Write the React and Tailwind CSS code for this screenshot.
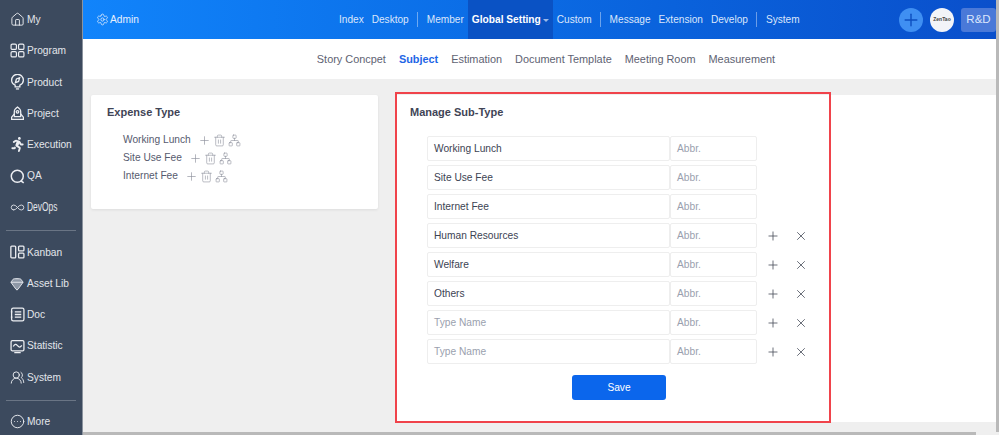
import React from "react";
import { Home, Infinity as Inf, Gem, CircleEllipsis, Settings, Plus, X, Trash2, Network, UsersRound } from "lucide-react";
import { FaRunning } from "react-icons/fa";

const ProgramIcon = () => (
  <svg width="15" height="15" viewBox="0 0 14 14" fill="none" stroke="currentColor" strokeWidth="1.1">
    <rect x="1" y="1" width="5" height="5" rx="1.2" /><rect x="8" y="1" width="5" height="5" rx="1.2" />
    <rect x="1" y="8" width="5" height="5" rx="1.2" /><rect x="8" y="8" width="5" height="5" rx="1.2" />
  </svg>
);
const ProductIcon = () => (
  <svg width="15" height="16" viewBox="0 0 14 15" fill="none" stroke="currentColor" strokeWidth="1.2">
    <path d="M4.800 12V10.400C3 9.500 1.500 7.800 1.500 5.800A5.500 5.500 0 0 1 12.500 5.800C12.500 7.800 11 9.500 9.200 10.400V12Z" />
    <path d="M5.500 14H8.500" /><path d="M9 3.500L8 7 5 8.200 6 4.700Z" />
  </svg>
);
const ProjectIcon = () => (
  <svg width="15" height="16" viewBox="0 0 14 15" fill="none" stroke="currentColor" strokeWidth="1.2">
    <path d="M4 10V5.500C4 3.500 5.500 2 7 1C8.500 2 10 3.500 10 5.500V10Z" />
    <path d="M4 7.500L1.500 10.500V12.500H12.500V10.500L10 7.500" /><circle cx="7" cy="5.500" r="1.200" />
  </svg>
);
const QaIcon = () => (
  <svg width="15" height="15" viewBox="0 0 14 14" fill="none" stroke="currentColor" strokeWidth="1.4">
    <circle cx="6.800" cy="6.800" r="5.600" /><path d="M10.200 11L12.800 13" />
  </svg>
);
const KanbanIcon = () => (
  <svg width="15" height="14" viewBox="0 0 14 13" fill="none" stroke="currentColor" strokeWidth="1.2">
    <rect x="0.800" y="1" width="4.500" height="11" rx="0.800" /><rect x="8" y="1" width="5" height="4.500" rx="0.800" /><rect x="8" y="7.500" width="5" height="4.500" rx="0.800" />
  </svg>
);
const DocIcon = () => (
  <svg width="15" height="15" viewBox="0 0 14 14" fill="none" stroke="currentColor" strokeWidth="1.2">
    <rect x="1.500" y="1" width="11.500" height="12" rx="1.500" /><path d="M4.500 4.500H10.500M4.500 7H10.500M4.500 9.500H10.500M0.800 4.500H2.200M0.800 9.500H2.200" />
  </svg>
);
const StatIcon = () => (
  <svg width="15" height="15" viewBox="0 0 14 14" fill="none" stroke="currentColor" strokeWidth="1.2">
    <rect x="1" y="1.500" width="12" height="9.500" rx="1.200" /><path d="M3 7C4.500 4.500 5.500 4.500 7 6.200S9.500 8 11 6M4 12.800H10" />
  </svg>
);
const ZIcon = ({ Icon }) => <Icon size={15} strokeWidth={1.5} />;

const sidebarTop = [
  ["My", <ZIcon Icon={Home} />],
  ["Program", <ProgramIcon />],
  ["Product", <ProductIcon />],
  ["Project", <ProjectIcon />],
  ["Execution", <FaRunning size={15} />],
  ["QA", <QaIcon />],
];
const sidebarMid = [
  ["Kanban", <KanbanIcon />],
  ["Asset Lib", <Gem size={14} strokeWidth={1.5} fill="#8d97a6" />],
  ["Doc", <DocIcon />],
  ["Statistic", <StatIcon />],
  ["System", <ZIcon Icon={UsersRound} />],
];

const SideItem = ({ label, icon }) => (
  <div className="h-[31.3px] shrink-0 flex items-center pl-[9.500px] gap-[2.500px] text-[10.200px] text-[#e3e6eb]">
    <span className="w-[15px] flex justify-center text-[#eceef2]">{icon}</span>
    <span>{label}</span>
  </div>
);

const Sep = () => <span className="w-px h-[15px] bg-white/40 mx-[4.500px]" />;
const TopLink = ({ children }) => <span className="text-[10.100px] text-[#dbe6fb] px-[4px]">{children}</span>;

const TreeRow = ({ label }) => (
  <div className="flex items-center h-[18px] text-[10.200px] text-[#565a6e]">
    <span>{label}</span>
    <span className="flex items-center gap-[2px] ml-[7px] text-[#8c909c]">
      <Plus size={13} strokeWidth={1.2} />
      <Trash2 size={13} strokeWidth={1.1} />
      <Network size={13} strokeWidth={1.1} />
    </span>
  </div>
);

const rows = [
  ["Working Lunch", false],
  ["Site Use Fee", false],
  ["Internet Fee", false],
  ["Human Resources", true],
  ["Welfare", true],
  ["Others", true],
  ["", true],
  ["", true],
];

const FormRow = ({ value, actions }) => (
  <div className="flex items-center h-[25px] mb-[4px]">
    <div className="w-[243px] h-[25px] border border-[#eeeeee] rounded-[2px] flex items-center px-[6px] text-[10.200px]">
      {value ? <span className="text-[#3c4353]">{value}</span> : <span className="text-[#9a9fae]">Type Name</span>}
    </div>
    <div className="w-[87px] h-[25px] border border-[#eeeeee] rounded-[2px] flex items-center px-[6px] text-[10.200px] text-[#9a9fae]">Abbr.</div>
    {actions && (
      <div className="flex items-center text-[#4a4f5c] ml-[9px] gap-[14px]">
        <Plus size={14} strokeWidth={1.4} />
        <X size={14} strokeWidth={1.4} />
      </div>
    )}
  </div>
);

export default function App() {
  return (
    <div className="relative w-[999px] h-[435px] overflow-hidden flex bg-[#efefef] font-['Liberation_Sans',Arial,sans-serif]">
      <aside className="w-[83px] h-full shrink-0 bg-[#3c4a5e] border-r border-[#8b939e] pt-[4px] flex flex-col overflow-hidden">
        {sidebarTop.map(([l, i]) => <SideItem key={l} label={l} icon={i} />)}
        <div className="h-[31.3px] shrink-0 flex items-center pl-[9.500px] gap-[2.500px] text-[#e3e6eb]">
          <span className="w-[15px] flex justify-center"><Inf size={15} strokeWidth={1.4} /></span>
          <span className="text-[12px] font-['Liberation_Sans',sans-serif] scale-x-[0.7] origin-left">DevOps</span>
        </div>
        <div className="h-px shrink-0 bg-[#6a7585] mx-[6px] mt-[6.500px] mb-[6px]" />
        {sidebarMid.map(([l, i]) => <SideItem key={l} label={l} icon={i} />)}
        <div className="h-px shrink-0 bg-[#6a7585] mx-[6px] mt-[7px] mb-[4.500px]" />
        <SideItem label="More" icon={<ZIcon Icon={CircleEllipsis} />} />
      </aside>

      <main className="flex-1 min-w-0 flex flex-col">
        <header className="h-[39px] shrink-0 flex items-center bg-gradient-to-r from-[#1184fb] to-[#0a4fcb] text-white pl-[13px] pr-[3px]">
          <span className="flex items-center gap-[1px] text-[10.200px] text-[#e6effd] w-[43px]"><Settings size={13} strokeWidth={1.4} />Admin</span>
          <nav className="flex items-center h-full ml-[196px]">
            <TopLink>Index</TopLink>
            <TopLink>Desktop</TopLink>
            <Sep />
            <TopLink>Member</TopLink>
            <span className="h-full flex items-center px-[4px] bg-[#0a52c4] text-[10.200px] font-bold text-white">
              Global Setting
              <span className="ml-[2px] mt-[1px] border-x-[3px] border-t-[3px] border-x-transparent border-t-white/60" />
            </span>
            <TopLink>Custom</TopLink>
            <Sep />
            <TopLink>Message</TopLink>
            <TopLink>Extension</TopLink>
            <TopLink>Develop</TopLink>
            <Sep />
            <TopLink>System</TopLink>
          </nav>
          <div className="ml-auto flex items-center gap-[7px]">
            <span className="w-[24px] h-[24px] rounded-full bg-[#3f8ff2] flex items-center justify-center text-[#0d4fc0]"><Plus size={20} strokeWidth={1.7} /></span>
            <span className="w-[24px] h-[24px] rounded-full bg-[#f2f4f8] flex items-center justify-center text-[5px] font-bold text-[#444]">ZenTao</span>
            <span className="w-[35px] h-[24px] rounded-[3px] bg-[#4a79d8] flex items-center justify-center text-[11.500px] text-[#dbe6fb]">R&amp;D</span>
          </div>
        </header>

        <div className="h-[40px] shrink-0 bg-white flex items-center justify-center gap-[13px] text-[10.900px] text-[#5e6272] pl-[10px] pt-[1px]">
          <span>Story Concpet</span>
          <span className="font-bold text-[#1e66e6]">Subject</span>
          <span>Estimation</span>
          <span>Document Template</span>
          <span>Meeting Room</span>
          <span>Measurement</span>
        </div>

        <div className="flex-1 min-h-0 flex items-start pt-[16px] pl-[8px]">
          <section className="w-[287px] h-[114px] bg-white rounded-[2px] shadow-[0_1px_3px_rgba(0,0,0,0.08)] pl-[16px] pt-[11px]">
            <h2 className="text-[11px] font-bold text-[#3f4456] mb-[12px] leading-[13px]">Expense Type</h2>
            <div className="pl-[16px]">
              <TreeRow label="Working Lunch" />
              <TreeRow label="Site Use Fee" />
              <TreeRow label="Internet Fee" />
            </div>
          </section>

          <section className="ml-[19px] w-[600px] h-[327px] bg-white pt-[11px] pl-[14px]">
            <h2 className="text-[11px] font-bold text-[#3f4456] leading-[13px] -ml-[1px] mb-[17px]">Manage Sub-Type</h2>
            <div className="pl-[16px]">
              {rows.map(([v, a], i) => <FormRow key={i} value={v} actions={a} />)}
              <button className="block ml-[145px] mt-[11px] w-[94px] h-[25px] bg-[#0b66ec] rounded-[3px] text-[10.200px] text-white">Save</button>
            </div>
          </section>
        </div>
      </main>

      <div className="absolute left-[395px] top-[92px] w-[436px] h-[331px] border-2 border-[#f0434b] pointer-events-none" />
      <div className="absolute left-[996px] top-0 w-[3px] h-[432px] bg-[#b9b9b9]" />
      <div className="absolute left-[83px] top-[432px] w-[893px] h-[3px] bg-[#b9b9b9]" />
    </div>
  );
}
